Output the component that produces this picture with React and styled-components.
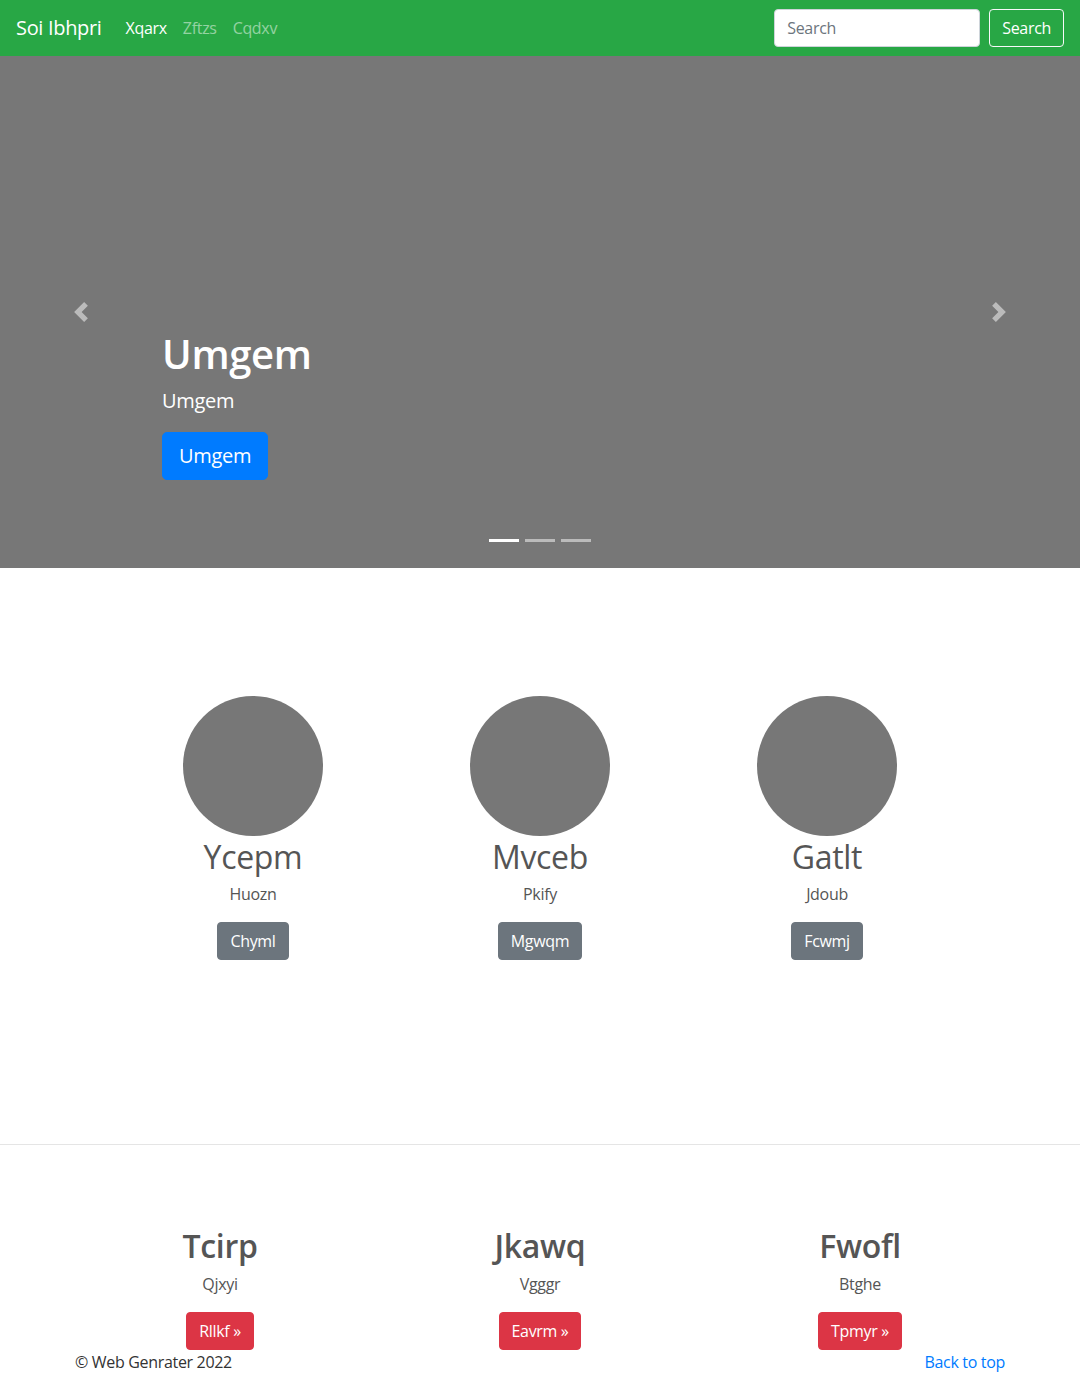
import React from 'react';
import styled, { createGlobalStyle } from 'styled-components';

const Global = createGlobalStyle`
  * { box-sizing: border-box; }
  html, body { margin: 0; padding: 0; }
  body {
    font-family: "Open Sans", "Noto Sans", "Liberation Sans", sans-serif;
    font-size: 16px;
    line-height: 1.5;
    letter-spacing: -0.02em;
    color: #212529;
    background: #fff;
  }
  input, button { letter-spacing: -0.02em; }
`;

const Navbar = styled.nav`
  height: 56px;
  background: #28a745;
  display: flex;
  align-items: center;
  padding: 8px 16px;
`;

const Brand = styled.a`
  font-size: 20px;
  line-height: 30px;
  color: #fff;
  margin-right: 16px;
  text-decoration: none;
`;

const NavLinks = styled.div`
  display: flex;
  flex: 1;
`;

const NavLink = styled.a`
  padding: 8px;
  font-size: 16px;
  line-height: 24px;
  text-decoration: none;
  color: ${p => (p.$active ? '#fff' : 'rgba(255,255,255,0.5)')};
`;

const SearchForm = styled.form`
  display: flex;
  align-items: center;
  gap: 9px;
`;

const SearchInput = styled.input`
  width: 206px;
  height: 38px;
  padding: 6px 12px;
  font: inherit;
  font-size: 16px;
  color: #495057;
  border: 1px solid #ced4da;
  border-radius: 4px;
  background: #fff;
  &::placeholder { color: #6c757d; }
`;

const OutlineButton = styled.button`
  height: 38px;
  padding: 6px 12px;
  font: inherit;
  font-size: 16px;
  color: #fff;
  background: transparent;
  border: 1px solid #f8f9fa;
  border-radius: 4px;
`;

const Carousel = styled.section`
  position: relative;
  height: 512px;
  background: #777;
  display: flex;
  flex-direction: column;
  justify-content: flex-end;
`;

const Caption = styled.div`
  margin: 0 15% 52px;
  padding-bottom: 20px;
  color: #fff;
  text-align: left;
`;

const CaptionTitle = styled.h1`
  margin: 0 0 8px;
  font-size: 40px;
  line-height: 1.2;
  font-weight: 600;
`;

const CaptionText = styled.p`
  margin: 0 0 16px;
  font-size: 20px;
  line-height: 30px;
`;

const Button = styled.a`
  display: inline-block;
  border-radius: ${p => (p.$lg ? '5px' : '4px')};
  padding: ${p => (p.$lg ? '8px 16px' : '6px 12px')};
  font-size: ${p => (p.$lg ? '20px' : '16px')};
  line-height: ${p => (p.$lg ? '30px' : '24px')};
  border: 1px solid ${p => p.$bg};
  background: ${p => p.$bg};
  color: #fff;
  text-decoration: none;
  vertical-align: top;
`;

const Control = styled.div`
  position: absolute;
  top: 0;
  bottom: 0;
  ${p => (p.$side === 'left' ? 'left: 0;' : 'right: 0;')}
  width: 15%;
  display: flex;
  align-items: center;
  justify-content: center;
  opacity: 0.5;
`;

const Indicators = styled.ol`
  position: absolute;
  left: 0;
  right: 0;
  bottom: 0;
  margin: 0 0 16px;
  padding: 0;
  list-style: none;
  display: flex;
  justify-content: center;
`;

const Indicator = styled.li`
  width: 30px;
  height: 3px;
  margin: 10px 3px;
  background: #fff;
  opacity: ${p => (p.$active ? 1 : 0.5)};
`;

const Divided = styled.div`
  border-bottom: 1px solid #e5e5e5;
`;

const Marketing = styled.section`
  width: 861px;
  margin: 128px auto 0;
  display: grid;
  grid-template-columns: repeat(3, 1fr);
  padding-bottom: 184px;
`;

const Col = styled.div`
  display: flex;
  flex-direction: column;
  align-items: center;
  text-align: center;
`;

const Circle = styled.div`
  width: 140px;
  height: 140px;
  border-radius: 50%;
  background: #777;
  margin-bottom: 2px;
`;

const ColTitle = styled.h2`
  margin: 0 0 6px;
  font-size: 32px;
  line-height: 1.2;
  font-weight: ${p => (p.$bold ? 600 : 400)};
  color: #555;
`;

const ColText = styled.p`
  margin: 0 0 16px;
  color: #555;
`;

const Container = styled.div`
  width: 960px;
  margin: 0 auto;
  padding: 0 15px;
`;

const Featured = styled.section`
  width: 960px;
  margin: 82px auto 0;
  display: grid;
  grid-template-columns: repeat(3, 1fr);
`;

const Footer = styled.footer`
  display: flex;
  justify-content: space-between;
  color: #333;
  line-height: 24px;
`;

const TopLink = styled.a`
  color: #007bff;
  text-decoration: none;
`;

const Chevron = ({ dir }) => (
  <svg width="20" height="20" viewBox="0 0 8 8" fill="#fff">
    {dir === 'left' ? (
      <path d="M5.25 0l-4 4 4 4 1.5-1.5L4.25 4l2.5-2.5L5.25 0z" />
    ) : (
      <path d="M2.75 0l-1.5 1.5L3.75 4l-2.5 2.5L2.75 8l4-4-4-4z" />
    )}
  </svg>
);

const circles = [
  { t: 'Ycepm', p: 'Huozn', b: 'Chyml' },
  { t: 'Mvceb', p: 'Pkify', b: 'Mgwqm' },
  { t: 'Gatlt', p: 'Jdoub', b: 'Fcwmj' },
];

const features = [
  { t: 'Tcirp', p: 'Qjxyi', b: 'Rllkf' },
  { t: 'Jkawq', p: 'Vgggr', b: 'Eavrm' },
  { t: 'Fwofl', p: 'Btghe', b: 'Tpmyr' },
];

export default function App() {
  return (
    <>
      <Global />
      <Navbar>
        <Brand href="#">Soi Ibhpri</Brand>
        <NavLinks>
          <NavLink $active href="#">Xqarx</NavLink>
          <NavLink href="#">Zftzs</NavLink>
          <NavLink href="#">Cqdxv</NavLink>
        </NavLinks>
        <SearchForm onSubmit={e => e.preventDefault()}>
          <SearchInput placeholder="Search" />
          <OutlineButton type="submit">Search</OutlineButton>
        </SearchForm>
      </Navbar>
      <Carousel>
        <Caption>
          <CaptionTitle>Umgem</CaptionTitle>
          <CaptionText>Umgem</CaptionText>
          <CaptionText>
            <Button $lg $bg="#007bff" href="#">Umgem</Button>
          </CaptionText>
        </Caption>
        <Control $side="left"><Chevron dir="left" /></Control>
        <Control $side="right"><Chevron dir="right" /></Control>
        <Indicators>
          <Indicator $active />
          <Indicator />
          <Indicator />
        </Indicators>
      </Carousel>
      <Divided>
        <Marketing>
          {circles.map(c => (
            <Col key={c.t}>
              <Circle />
              <ColTitle>{c.t}</ColTitle>
              <ColText>{c.p}</ColText>
              <Button $bg="#6c757d" href="#">{c.b}</Button>
            </Col>
          ))}
        </Marketing>
      </Divided>
      <Featured>
        {features.map(c => (
          <Col key={c.t}>
            <ColTitle $bold>{c.t}</ColTitle>
            <ColText>{c.p}</ColText>
            <Button $bg="#dc3545" href="#">{c.b} »</Button>
          </Col>
        ))}
      </Featured>
      <Container>
        <Footer>
          <span>© Web Genrater 2022</span>
          <TopLink href="#">Back to top</TopLink>
        </Footer>
      </Container>
    </>
  );
}
